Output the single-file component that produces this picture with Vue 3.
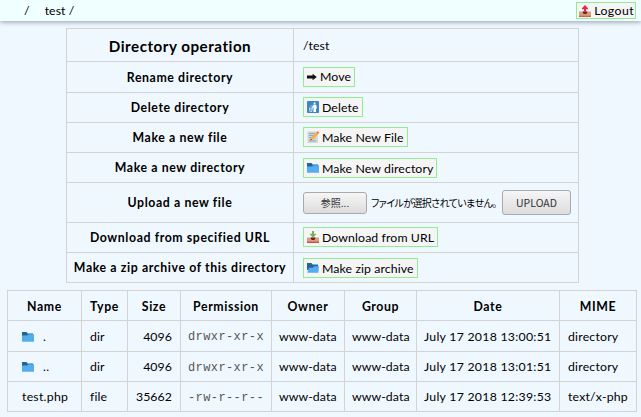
<script setup>
import { h } from 'vue'

const art = {
  folder: [
    ['M0 1h4.5l1.2 1.5H11V8H0z', '#226699'],
    ['M0 4.6h5l1.3-1.3H12v7.5H0z', '#55acee'],
  ],
  open: [
    ['M0 1h4.5l1.2 1.5H11V8H0z', '#226699'],
    ['M.2 10.8L2 5.7h3.8l1.3-1.5H12l-.6 6.6H0z', '#55acee'],
  ],
  up: [
    ['M0 6.5h12v5H0z', '#d99e82'],
    ['M0 10.7h12V12H0z', '#c1694f'],
    ['M3.8 6.5h4.4v1.2L7.2 9H4.8L3.8 7.7z', '#662113'],
    ['M6 0l3 3.2v1H7v3H5v-3H3v-1z', '#dd2e44'],
  ],
  down: [
    ['M0 6.5h12v5H0z', '#d99e82'],
    ['M0 10.7h12V12H0z', '#be5140'],
    ['M3.8 6.5h4.4v1.2L7.2 9H4.8L3.8 7.7z', '#662113'],
    ['M5 0h2v2.7h2v.9L6 6.8l-3-3.2v-.9h2z', '#77b255'],
  ],
  arrow: [['M0 4.5h5.6V2.8L9.8 6 5.6 9.2V7.5H0z', '#111']],
  litter: [
    ['M.5 0h11l.5.5v11l-.5.5H.5L0 11.5V.5z', '#3b88c3'],
    ['M6.7 1.5h1.8v1.8H6.7zM6.2 3.8h3l.7 3.7H9V11H6.5V6.5L4.8 7.2V6.4z', '#fff'],
    ['M2 6.7h3.8l-.6 4.1H2.6zM3.7 4.5h1v1h-1z', '#d4e9f8'],
    ['M3 7.5h1.8l-.3 2.4H3.3z', '#5c9fce'],
  ],
  memo: [
    ['M.5.5h10.3V12H.5z', '#ccd6dd'],
    ['M2 2.3h6v.7H2zM2 4.2h5v.7H2zM2 6.1h3v.7H2zM2 9.5h7v.7H2z', '#8899a6'],
    ['M9.6 1.2l1.7 1.7-5.4 5.5-2.6.8.8-2.4z', '#ffac33'],
    ['M9.6 1.2l1.1-1 1.3 1.3-.7 1.4z', '#ea596e'],
    ['M3.3 9.2l.5-1.5 1 1z', '#292f33'],
  ],
}
const Icon = (p) => h('svg', { class: 'icon', viewBox: '0 0 12 12', width: p.name === 'arrow' ? 10 : 12, height: 12, preserveAspectRatio: 'xMinYMid slice' },
  art[p.name].map(([d, fill]) => h('path', { d, fill })))
Icon.props = ['name']

const operations = [
  { label: 'Rename directory', icon: 'arrow', text: 'Move' },
  { label: 'Delete directory', icon: 'litter', text: 'Delete' },
  { label: 'Make a new file', icon: 'memo', text: 'Make New File' },
  { label: 'Make a new directory', icon: 'folder', text: 'Make New directory' },
  { label: 'Upload a new file' },
  { label: 'Download from specified URL', icon: 'down', text: 'Download from URL' },
  { label: 'Make a zip archive of this directory', icon: 'open', text: 'Make zip archive' },
]
const headings = ['Name', 'Type', 'Size', 'Permission', 'Owner', 'Group', 'Date', 'MIME']
const files = [
  { name: '.', type: 'dir', size: 4096, mode: 'drwxr-xr-x', date: 'July 17 2018 13:00:51', mime: 'directory' },
  { name: '..', type: 'dir', size: 4096, mode: 'drwxr-xr-x', date: 'July 17 2018 13:01:51', mime: 'directory' },
  { name: 'test.php', type: 'file', size: 35662, mode: '-rw-r--r--', date: 'July 17 2018 12:39:53', mime: 'text/x-php' },
]
</script>

<template>
  <div class="page">
    <header class="bar">
      <nav class="crumbs"><span>/</span><span>test /</span></nav>
      <a class="action logout"><Icon name="up" /><span>Logout</span></a>
    </header>
    <section class="operations">
      <div class="label title">Directory operation</div>
      <div class="value path">/test</div>
      <template v-for="op in operations" :key="op.label">
        <div class="label">{{ op.label }}</div>
        <div class="value" :class="{ low: op.icon === 'folder' || op.icon === 'open' }">
          <a v-if="op.icon" class="action"><Icon :name="op.icon" /><span>{{ op.text }}</span></a>
          <template v-else>
            <button class="browse">参照...</button>
            <span class="hint">ファイルが選択されていません。</span>
            <button class="upload">UPLOAD</button>
          </template>
        </div>
      </template>
    </section>
    <section class="files">
      <div v-for="t in headings" :key="t" class="head">{{ t }}</div>
      <template v-for="f in files" :key="f.name">
        <div class="name"><Icon v-if="f.type === 'dir'" name="folder" /><span>{{ f.name }}</span></div>
        <div>{{ f.type }}</div>
        <div class="size">{{ f.size }}</div>
        <div class="mode">{{ f.mode }}</div>
        <div class="near">www-data</div>
        <div class="near">www-data</div>
        <div class="near date">{{ f.date }}</div>
        <div class="mime">{{ f.mime }}</div>
      </template>
    </section>
  </div>
</template>

<style>
body { background: #f0f8ff; overflow: hidden; }
</style>

<style scoped>
.page {
  height: 417px;
  font: 12.3px/16px Lato, "Noto Sans CJK JP", sans-serif;
  letter-spacing: 0.08px;
  color: #000;
  white-space: nowrap;
}
.page * { box-sizing: border-box; }
.bar {
  display: flex;
  justify-content: space-between;
  align-items: flex-start;
  height: 21px;
  padding: 2px 5px 0 24px;
  background: #f0ffff;
  box-shadow: 0 1px 5px rgba(0, 10, 30, 0.4);
}
.crumbs { display: flex; gap: 15px; padding-top: 1px; }
.action {
  display: inline-flex;
  align-items: center;
  gap: 3px;
  height: 20px;
  padding: 0 3px;
  border: 1px solid #90ee90;
  background: #f5f5f5;
  letter-spacing: 0.1px;
}
.value .action { margin-top: -1px; }
.value .action span { padding-top: 1px; }
.operations .low { padding-top: 2px; }
.logout { height: 17px; padding: 0 1px 0 2px; letter-spacing: 0.4px; }
.icon { flex: none; display: block; }
.operations {
  display: grid;
  grid-template-columns: 227px 285px;
  grid-template-rows: 33px 31px 30px 30px 30px 40px 30px 30px;
  width: 513px;
  margin: 7px 0 0 66px;
  border: solid #d3d3d3;
  border-width: 1px 0 0 1px;
}
.operations > div, .files > div {
  display: flex;
  align-items: center;
  border: solid #d3d3d3;
  border-width: 0 1px 1px 0;
}
.label, .head { justify-content: center; font-weight: 700; letter-spacing: 0.6px; }
.operations .label { padding-top: 1px; }
.operations .title { font-size: 15.2px; letter-spacing: 0.5px; }
.value { padding-left: 9px; }
.operations .path { padding-top: 2px; }
button {
  padding: 0;
  border: 1px solid #aaa;
  border-radius: 3px;
  background: linear-gradient(#f6f6f6, #dcdcdc);
  color: #333;
  font: 10px/14px "Noto Sans CJK JP", sans-serif;
}
.browse { width: 64px; height: 22px; }
.hint { width: 127px; margin: 0 4px; font: 10px/14px "Noto Sans CJK JP", sans-serif; font-feature-settings: "palt"; letter-spacing: -0.6px; }
.upload { width: 69px; height: 25px; font-size: 10.5px; }
.files {
  display: grid;
  grid-template-columns: 74px 46px 53px 91px 73px 72px 143px 77px;
  grid-template-rows: 30px 31px 30px 30px;
  width: 630px;
  margin: 7px 0 0 7px;
  border: solid #d3d3d3;
  border-width: 1px 0 0 1px;
}
.files > div { padding: 1px 7px 0 8px; }
.files .head { padding: 2px 0 0; }
.files .name { padding-left: 14px; gap: 9px; letter-spacing: 0.25px; }
.files .size { justify-content: flex-end; padding-right: 8px; }
.files .near { padding-left: 7px; }
.files .date { letter-spacing: 0.26px; }
.files .mime { letter-spacing: 0.2px; }
.files .mode { font: 12px "Liberation Mono", monospace; letter-spacing: 0.4px; color: #555; padding: 2px 0 0 7px; }
</style>
